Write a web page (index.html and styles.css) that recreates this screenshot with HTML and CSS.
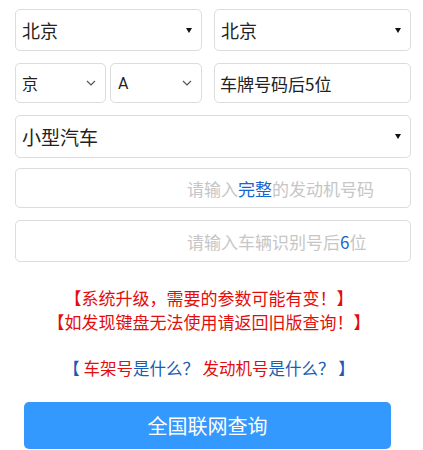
FILE: index.html
```html
<!DOCTYPE html>
<html lang="zh-CN">
  <head>
    <meta charset="UTF-8" />
    <meta name="viewport" content="width=device-width, initial-scale=1.0" />
    <title>全国联网查询</title>
    <link rel="stylesheet" href="styles.css">
  </head>
  <body>
    <div class="page">
      <div class="row row-city">
        <div class="box select big">
          <span>北京</span>
          <svg class="tri" width="6" height="5" viewBox="0 0 6 5"><path d="M0 0H6L3 5Z" fill="#111"/></svg>
        </div>
        <div class="box select big">
          <span>北京</span>
          <svg class="tri" width="6" height="5" viewBox="0 0 6 5"><path d="M0 0H6L3 5Z" fill="#111"/></svg>
        </div>
      </div>

      <div class="row row-plate">
        <div class="plate-left">
          <div class="box select small">
            <span>京</span>
            <svg class="chev" width="10" height="6" viewBox="0 0 10 6"><path d="M1 1L5 5L9 1" fill="none" stroke="#555" stroke-width="1.2"/></svg>
          </div>
          <div class="box select small">
            <span class="latin">A</span>
            <svg class="chev" width="10" height="6" viewBox="0 0 10 6"><path d="M1 1L5 5L9 1" fill="none" stroke="#555" stroke-width="1.2"/></svg>
          </div>
        </div>
        <div class="box input plate-no">车牌号码后5位</div>
      </div>

      <div class="box select car-type">
        <span>小型汽车</span>
        <svg class="tri" width="6" height="5" viewBox="0 0 6 5"><path d="M0 0H6L3 5Z" fill="#111"/></svg>
      </div>

      <div class="box input hint engine">请输入<em>完整</em>的发动机号码</div>
      <div class="box input hint vin">请输入车辆识别号后<em>6</em>位</div>

      <div class="notice">
        <p>【系统升级，需要的参数可能有变！】</p>
        <p>【如发现键盘无法使用请返回旧版查询！】</p>
      </div>

      <p class="help">【 <a>车架号</a>是什么？ <a>发动机号</a>是什么？ 】</p>

      <button class="btn">全国联网查询</button>
    </div>
  </body>
</html>
```

FILE: styles.css
```css
body {
    margin: 0;
    background-color: #fff;
    font-family: "Noto Sans CJK SC", "Noto Sans", sans-serif;
    color: #222;
}
.page {
    width: 396px;
    padding: 9px 0 0 15px;
}
.box {
    box-sizing: border-box;
    border: 1px solid #dcdcdc;
    border-radius: 5px;
    background-color: #fff;
}
.select {
    display: flex;
    align-items: center;
    justify-content: space-between;
    padding: 0 9px 0 6px;
}
.row {
    display: grid;
    grid-template-columns: 187px 197px;
    column-gap: 12px;
}
.big {
    height: 42px;
    font-size: 18px;
}
.row-plate {
    margin-top: 12px;
    height: 40px;
}
.plate-left {
    display: grid;
    grid-template-columns: 91px 92px;
    column-gap: 4px;
}
.small {
    font-size: 16px;
}
.small .latin {
    font-family: "Roboto", sans-serif;
    padding-left: 1px;
}
.input {
    display: flex;
    align-items: center;
    padding-left: 5px;
}
.plate-no {
    font-size: 17px;
}
.car-type {
    margin-top: 12px;
    height: 43px;
    font-size: 19px;
}
.hint {
    font-size: 17px;
    color: #c6c6c6;
    padding-left: 171px;
}
.hint em {
    font-style: normal;
    color: #1466d2;
}
.engine {
    margin-top: 10px;
    height: 40px;
}
.vin {
    margin-top: 12px;
    height: 42px;
}
.notice {
    margin-top: 24px;
    margin-left: -8px;
    text-align: center;
    color: #e30d0d;
    font-size: 17px;
    line-height: 24px;
}
.notice p {
    margin: 0;
}
.help {
    margin: 22px 0 0 -8px;
    text-align: center;
    color: #1a5cb0;
    font-size: 16.5px;
    line-height: 24px;
}
.help a {
    color: #e30d0d;
}
.btn {
    display: block;
    margin: 22px 0 0 9px;
    width: 367px;
    height: 47px;
    border: none;
    border-radius: 5px;
    background-color: #3399ff;
    color: #fff;
    font-family: "Noto Sans CJK SC", "Noto Sans", sans-serif;
    font-size: 20px;
}
```
